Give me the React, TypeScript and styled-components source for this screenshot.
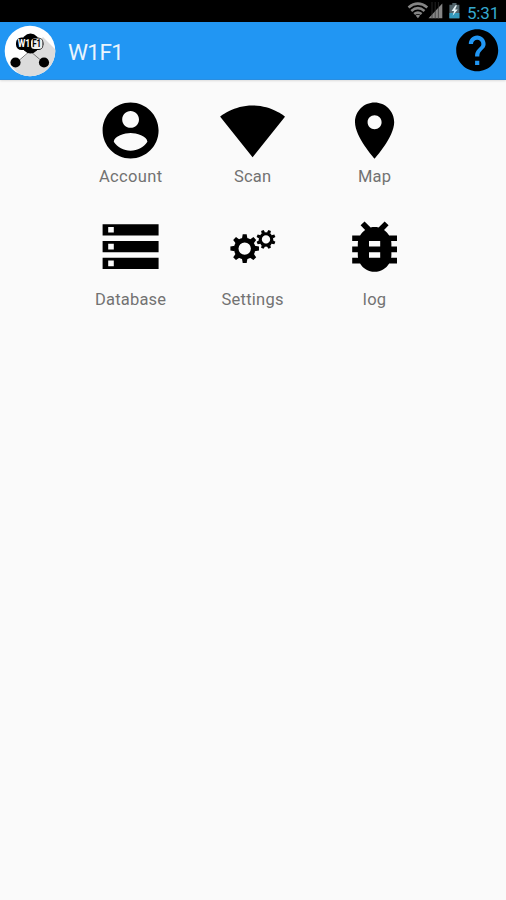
import React from "react";
import styled, { createGlobalStyle } from "styled-components";

const GlobalStyle = createGlobalStyle`
  * { box-sizing: border-box; }
  html, body { margin: 0; padding: 0; background: #fafafa; }
  body { font-family: Roboto, "Noto Sans", sans-serif; }
  svg { display: block; flex: none; }
`;

const Screen = styled.div`
  width: 506px;
  height: 900px;
  overflow: hidden;
  background: #fafafa;
`;

const StatusBar = styled.div`
  height: 22px;
  background: #000;
  display: flex;
  align-items: flex-start;
  justify-content: flex-end;
  padding-right: 7px;
`;

const Clock = styled.span`
  margin: 3px 0 0 6px;
  width: 32px;
  font-size: 17px;
  line-height: 20px;
  letter-spacing: -0.2px;
  color: #35a9cf;
`;

const AppBar = styled.header`
  height: 58px;
  background: #2196f3;
  border-bottom: 1px solid #2a8ee0;
  box-shadow: 0 1px 2px rgba(0, 0, 0, 0.12);
  display: flex;
  align-items: center;
  padding: 0 3.5px 0 4px;
`;

const Title = styled.h1`
  flex: 1;
  margin: 2px 0 0 12px;
  font-size: 22.5px;
  line-height: 28px;
  font-weight: 400;
  letter-spacing: -0.6px;
  color: #e9f4fd;
`;

const HelpButton = styled.button`
  margin: 0;
  padding: 0;
  border: 0;
  background: none;
`;

const Grid = styled.main`
  display: grid;
  grid-template-columns: repeat(3, 122px);
  grid-auto-rows: 116px;
  padding: 16.5px 0 0 69.5px;
`;

const Tile = styled.div<{ $gap: number }>`
  display: flex;
  flex-direction: column;
  align-items: center;
  gap: ${(p) => p.$gap}px;
`;

const Label = styled.span<{ $spacing: number }>`
  font-size: 16.5px;
  line-height: 20px;
  letter-spacing: ${(p) => p.$spacing}px;
  margin-right: -${(p) => p.$spacing}px;
  color: #727272;
`;

const icons = {
  help: "M12 2C6.48 2 2 6.48 2 12s4.48 10 10 10 10-4.48 10-10S17.52 2 12 2zm1 17h-2v-2h2v2zm2.07-7.75l-.9.92C13.45 12.9 13 13.5 13 15h-2v-.5c0-1.1.45-2.1 1.17-2.83l1.24-1.26c.37-.36.59-.86.59-1.41 0-1.1-.9-2-2-2s-2 .9-2 2H8c0-2.21 1.79-4 4-4s4 1.79 4 4c0 .88-.36 1.68-.93 2.25z",
  account:
    "M12 2C6.48 2 2 6.48 2 12s4.48 10 10 10 10-4.48 10-10S17.52 2 12 2zm0 3c1.66 0 3 1.34 3 3s-1.34 3-3 3-3-1.34-3-3 1.34-3 3-3zm0 14.2c-2.5 0-4.71-1.28-6-3.22.03-1.99 4-3.08 6-3.08 1.99 0 5.97 1.09 6 3.08-1.29 1.94-3.5 3.22-6 3.22z",
  scan: "M12.01 21.49L23.64 7c-.45-.34-4.93-4-11.64-4C5.28 3 .81 6.66.36 7l11.63 14.49.01.01.01-.01z",
  map: "M12 2C8.13 2 5 5.13 5 9c0 5.25 7 13 7 13s7-7.75 7-13c0-3.87-3.13-7-7-7zm0 9.5c-1.38 0-2.5-1.12-2.5-2.5s1.12-2.5 2.5-2.5 2.5 1.12 2.5 2.5-1.12 2.5-2.5 2.5z",
  database:
    "M2 20h20v-4H2v4zm2-3h2v2H4v-2zM2 4v4h20V4H2zm4 3H4V5h2v2zm-4 7h20v-4H2v4zm2-3h2v2H4v-2z",
  log: "M20 8h-2.81c-.45-.78-1.07-1.45-1.82-1.96L17 4.41 15.59 3l-2.17 2.17C12.96 5.06 12.49 5 12 5c-.49 0-.96.06-1.41.17L8.41 3 7 4.41l1.62 1.63C7.88 6.55 7.26 7.22 6.81 8H4v2h2.09c-.05.33-.09.66-.09 1v1H4v2h2v1c0 .34.04.67.09 1H4v2h2.81c1.04 1.79 2.97 3 5.19 3s4.15-1.21 5.19-3H20v-2h-2.09c.05-.33.09-.66.09-1v-1h2v-2h-2v-1c0-.34-.04-.67-.09-1H20V8zm-6 8h-4v-2h4v2zm0-4h-4v-2h4v2z",
};

const Icon = ({ d, size = 67.2 }: { d: string; size?: number }) => (
  <svg width={size} height={size} viewBox="0 0 24 24">
    <path d={d} />
  </svg>
);

type GearProps = { cx: number; cy: number; r: number; turn: number };

const Gear = ({ cx, cy, r, turn }: GearProps) => (
  <g transform={`translate(${cx} ${cy}) rotate(${turn}) scale(${r / 14.5})`}>
    <circle r="8.6" fill="none" stroke="#000" strokeWidth="4.6" />
    {[0, 45, 90, 135, 180, 225, 270, 315].map((a) => (
      <path key={a} d="M-2.8 -10H2.8L2 -14.5H-2z" transform={`rotate(${a})`} />
    ))}
  </g>
);

/* Two meshed cog wheels, the smaller one up and to the right. */
const SettingsIcon = () => (
  <svg width="67.2" height="67.2" viewBox="0 0 67.2 67.2">
    <Gear cx={25.7} cy={35.6} r={14.3} turn={0} />
    <Gear cx={47} cy={26.4} r={9.6} turn={22.5} />
  </svg>
);

const Logo = () => (
  <svg width="52" height="52" viewBox="0 0 52 52">
    <defs>
      <clipPath id="disc">
        <circle cx="26" cy="26" r="25.3" />
      </clipPath>
    </defs>
    <circle cx="26" cy="26" r="25.3" fill="#fff" />
    <g clipPath="url(#disc)">
      <path d="M39 12L56 29V56H22L8 42 26 27z" fill="#dcdcdc" />
    </g>
    <path d="M26 26L12 38M26 26L40 38" stroke="#777" strokeWidth="1" />
    <ellipse cx="26.5" cy="18.5" rx="9" ry="10" />
    <rect x="12" y="12.5" width="27.5" height="12.5" rx="5.5" />
    <rect x="27" y="13.5" width="11.5" height="10.5" rx="3.5" fill="#eee" />
    <text x="13.8" y="22.4" fontSize="10.5" fontWeight="700" fill="#fff" textLength="12.5" lengthAdjust="spacingAndGlyphs">
      W1
    </text>
    <text x="28.2" y="22.4" fontSize="10.5" fontWeight="700" textLength="9" lengthAdjust="spacingAndGlyphs">
      F1
    </text>
    <circle cx="11.5" cy="37.5" r="5.1" />
    <circle cx="40" cy="37.5" r="5.1" />
  </svg>
);

const StatusIcons = () => (
  <svg width="54" height="22" viewBox="0 0 54 22">
    <g fill="none" stroke="#858585" strokeWidth="2.6">
      <path d="M1.5 7.5Q10.8 -0.1 20.3 7.5" />
      <path d="M4.3 10.9Q10.8 5.5 17.5 10.9" />
      <path d="M7.2 14.1Q10.8 11.1 14.6 14.1" />
    </g>
    <path d="M10.9 18.3L8.6 15.6Q10.9 13.9 13.2 15.6z" fill="#858585" />
    <path d="M21.5 18.3L35.3 3.4V18.3z" fill="#858585" />
    <path d="M25 2V19M28.2 2V19M31.4 2V19" stroke="#333" strokeWidth="0.7" />
    <path d="M45.3 3H49.5V4.8H52.4V18.3H42.4V4.8H45.3z" fill="#52646b" />
    <path d="M42.4 13H52.4V18.3H42.4z" fill="#3499bb" />
    <path d="M48.5 5.3L44.6 11H47.1L45.6 15.8L50.8 9.5H48.1L50 5.3z" fill="#e8f4f7" />
  </svg>
);

const tiles = [
  { label: "Account", icon: <Icon d={icons.account} />, spacing: 0.35 },
  { label: "Scan", icon: <Icon d={icons.scan} />, spacing: 0.2 },
  { label: "Map", icon: <Icon d={icons.map} />, spacing: 0.1 },
  { label: "Database", icon: <Icon d={icons.database} />, spacing: 0.2 },
  { label: "Settings", icon: <SettingsIcon />, spacing: 0.25 },
  { label: "log", icon: <Icon d={icons.log} />, spacing: 0.3 },
];

export default function App() {
  return (
    <Screen>
      <GlobalStyle />
      <StatusBar>
        <StatusIcons />
        <Clock>5:31</Clock>
      </StatusBar>
      <AppBar>
        <Logo />
        <Title>W1F1</Title>
        <HelpButton aria-label="Help">
          <Icon d={icons.help} size={50.4} />
        </HelpButton>
      </AppBar>
      <Grid>
        {tiles.map((t, i) => (
          <Tile key={t.label} $gap={i < 3 ? 3.5 : 10.5}>
            {t.icon}
            <Label $spacing={t.spacing}>{t.label}</Label>
          </Tile>
        ))}
      </Grid>
    </Screen>
  );
}
